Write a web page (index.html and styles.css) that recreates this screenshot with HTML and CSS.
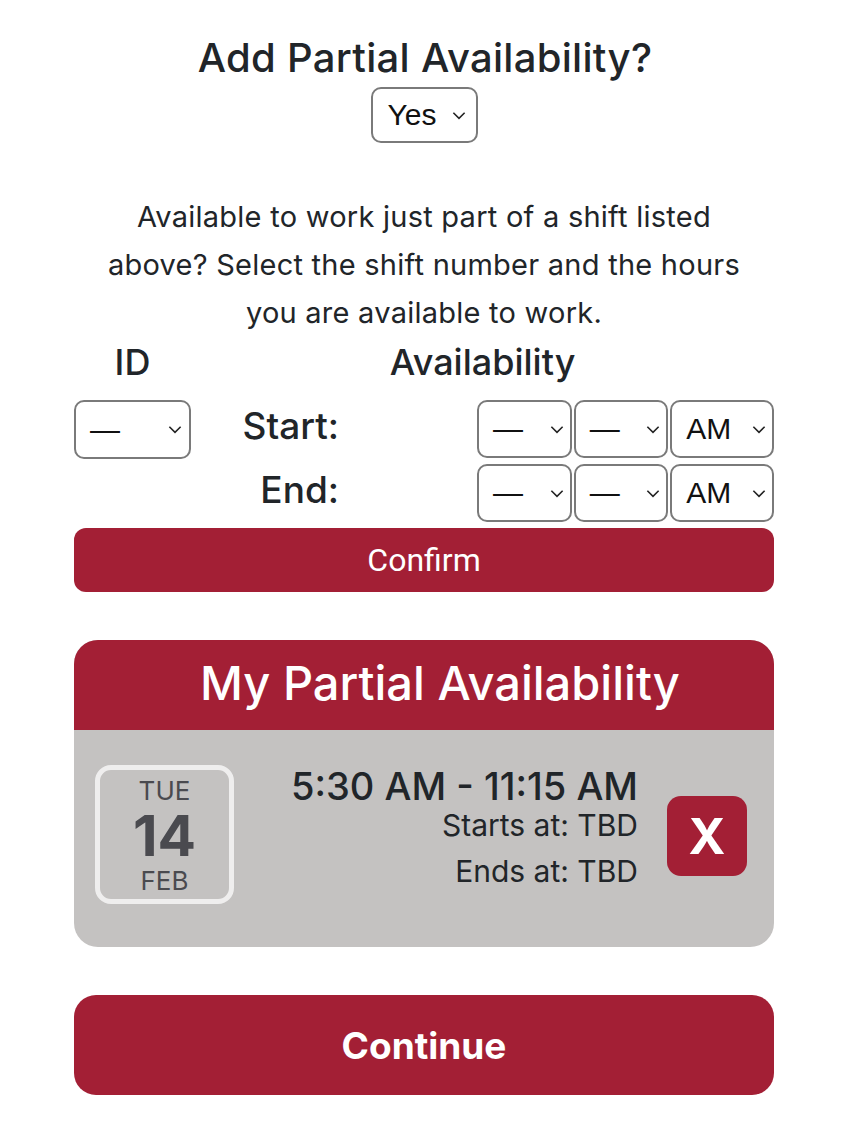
FILE: index.html
```html
<!DOCTYPE html>
<html>
<head>
<meta charset="utf-8">
<link rel="stylesheet" href="styles.css">
</head>
<body>
<main class="page">
  <h1 class="title">Add Partial Availability?</h1>
  <div class="center">
    <div class="sel sel-yes"><span>Yes</span><svg class="chev" viewBox="0 0 12 8"><path d="M1 1.5 L6 6.5 L11 1.5" fill="none" stroke="#222" stroke-width="1.4"/></svg></div>
  </div>
  <p class="intro">Available to work just part of a shift listed above? Select the shift number and the hours you are available to work.</p>

  <div class="grid">
    <div class="hdr hdr-id">ID</div>
    <div class="hdr hdr-av">Availability</div>

    <div class="sel sel-id"><span>—</span><svg class="chev" viewBox="0 0 12 8"><path d="M1 1.5 L6 6.5 L11 1.5" fill="none" stroke="#222" stroke-width="1.4"/></svg></div>
    <div class="lbl lbl-start">Start:</div>
    <div class="times">
      <div class="sel sel-t"><span>—</span><svg class="chev" viewBox="0 0 12 8"><path d="M1 1.5 L6 6.5 L11 1.5" fill="none" stroke="#222" stroke-width="1.4"/></svg></div>
      <div class="sel sel-t"><span>—</span><svg class="chev" viewBox="0 0 12 8"><path d="M1 1.5 L6 6.5 L11 1.5" fill="none" stroke="#222" stroke-width="1.4"/></svg></div>
      <div class="sel sel-ap"><span>AM</span><svg class="chev" viewBox="0 0 12 8"><path d="M1 1.5 L6 6.5 L11 1.5" fill="none" stroke="#222" stroke-width="1.4"/></svg></div>
    </div>

    <div class="blank"></div>
    <div class="lbl lbl-end">End:</div>
    <div class="times">
      <div class="sel sel-t"><span>—</span><svg class="chev" viewBox="0 0 12 8"><path d="M1 1.5 L6 6.5 L11 1.5" fill="none" stroke="#222" stroke-width="1.4"/></svg></div>
      <div class="sel sel-t"><span>—</span><svg class="chev" viewBox="0 0 12 8"><path d="M1 1.5 L6 6.5 L11 1.5" fill="none" stroke="#222" stroke-width="1.4"/></svg></div>
      <div class="sel sel-ap"><span>AM</span><svg class="chev" viewBox="0 0 12 8"><path d="M1 1.5 L6 6.5 L11 1.5" fill="none" stroke="#222" stroke-width="1.4"/></svg></div>
    </div>
  </div>

  <button class="btn-confirm">Confirm</button>

  <section class="card">
    <div class="card-head">My Partial Availability</div>
    <div class="card-body">
      <div class="date">
        <div class="dow">TUE</div>
        <div class="day">14</div>
        <div class="mon">FEB</div>
      </div>
      <div class="info">
        <div class="range">5:30 AM - 11:15 AM</div>
        <div class="sub">Starts at: TBD</div>
        <div class="sub sub2">Ends at: TBD</div>
      </div>
      <button class="del">X</button>
    </div>
  </section>

  <button class="btn-continue">Continue</button>
</main>
</body>
</html>
```

FILE: styles.css
```css
* { box-sizing: border-box; }
html, body { margin: 0; padding: 0; background: #fff; }
body {
  font-family: Inter, "Noto Sans", "Liberation Sans", sans-serif;
  color: #212529;
}
.page {
  width: 700px;
  margin: 0 0 0 74px;
  padding-top: 33px;
  display: flex;
  flex-direction: column;
}
.title {
  margin: 0;
  text-align: center;
  font-size: 40px;
  font-weight: 500;
  line-height: 50px;
  letter-spacing: 0.3px;
  padding-left: 2px;
}
.center { display: flex; justify-content: center; margin-top: 4px; }
.sel {
  border: 2px solid #7a7a7a;
  border-radius: 10px;
  background: #fff;
  display: flex;
  align-items: center;
  justify-content: space-between;
  font-family: "Liberation Sans", Arial, sans-serif;
  color: #111;
}
.chev { width: 14px; height: 9px; flex: none; }
.sel-yes {
  width: 107px;
  height: 56px;
  padding: 0 10px 0 15px;
  font-size: 30px;
}
.intro {
  margin: 50px 0 0;
  text-align: center;
  font-size: 29px;
  line-height: 48px;
  letter-spacing: 0.25px;
  padding: 0 16px;
}
.grid {
  display: grid;
  grid-template-columns: 117px 1fr 297px;
  grid-template-rows: 63px 64px 63px;
}
.hdr {
  font-size: 36px;
  font-weight: 500;
  line-height: 50px;
  align-self: start;
}
.hdr-id { text-align: center; }
.hdr-av { grid-column: 2 / 4; text-align: center; }
.sel-id {
  width: 117px;
  height: 59px;
  padding: 0 7px 0 14px;
  font-size: 30px;
  align-self: start;
}
.lbl {
  font-size: 37px;
  font-weight: 500;
  line-height: 50px;
  text-align: right;
  padding-right: 138px;
  align-self: start;
  margin-top: 1px;
}
.times {
  display: flex;
  gap: 2px;
  justify-content: flex-end;
  align-self: start;
}
.sel-t {
  width: 95px;
  height: 58px;
  padding: 0 6px 0 14px;
  font-size: 30px;
}
.sel-ap {
  width: 104px;
  height: 58px;
  padding: 0 6px 0 14px;
  font-size: 30px;
}
.btn-confirm {
  margin-top: 1px;
  height: 64px;
  border: none;
  border-radius: 12px;
  background: #a31f35;
  color: #fff;
  font-family: Roboto, "Liberation Sans", sans-serif;
  font-size: 32px;
  font-weight: 400;
  padding: 0;
}
.card {
  margin-top: 48px;
  border-radius: 24px;
  overflow: hidden;
  background: #c4c2c1;
}
.card-head {
  background: #a31f35;
  color: #fff;
  height: 90px;
  display: flex;
  align-items: center;
  justify-content: center;
  font-size: 47px;
  font-weight: 500;
  padding: 0 0 6px 32px;
}
.card-body {
  height: 217px;
  display: flex;
  align-items: flex-start;
  padding: 35px 0 0 21px;
}
.date {
  width: 139px;
  height: 139px;
  border: 5px solid #efeeee;
  border-radius: 16px;
  display: flex;
  flex-direction: column;
  align-items: center;
  color: #4a4a4f;
  padding-top: 7px;
}
.dow { font-size: 26px; line-height: 28px; }
.day { font-size: 57px; font-weight: 700; line-height: 62px; }
.mon { font-size: 26px; line-height: 28px; }
.info {
  flex: 1;
  text-align: right;
}
.range { font-size: 38px; font-weight: 500; line-height: 42px; }
.sub { font-size: 30px; line-height: 36px; }
.sub2 { margin-top: 10px; }
.del {
  width: 80px;
  height: 80px;
  margin: 31px 27px 0 29px;
  border: none;
  border-radius: 14px;
  background: #a31f35;
  color: #fff;
  font-family: Inter, "Liberation Sans", sans-serif;
  font-size: 50px;
  font-weight: 700;
  padding: 0;
}
.btn-continue {
  margin-top: 48px;
  height: 100px;
  border: none;
  border-radius: 22px;
  background: #a31f35;
  color: #fff;
  font-family: Inter, "Liberation Sans", sans-serif;
  font-size: 37px;
  font-weight: 700;
  padding: 0;
}
```
